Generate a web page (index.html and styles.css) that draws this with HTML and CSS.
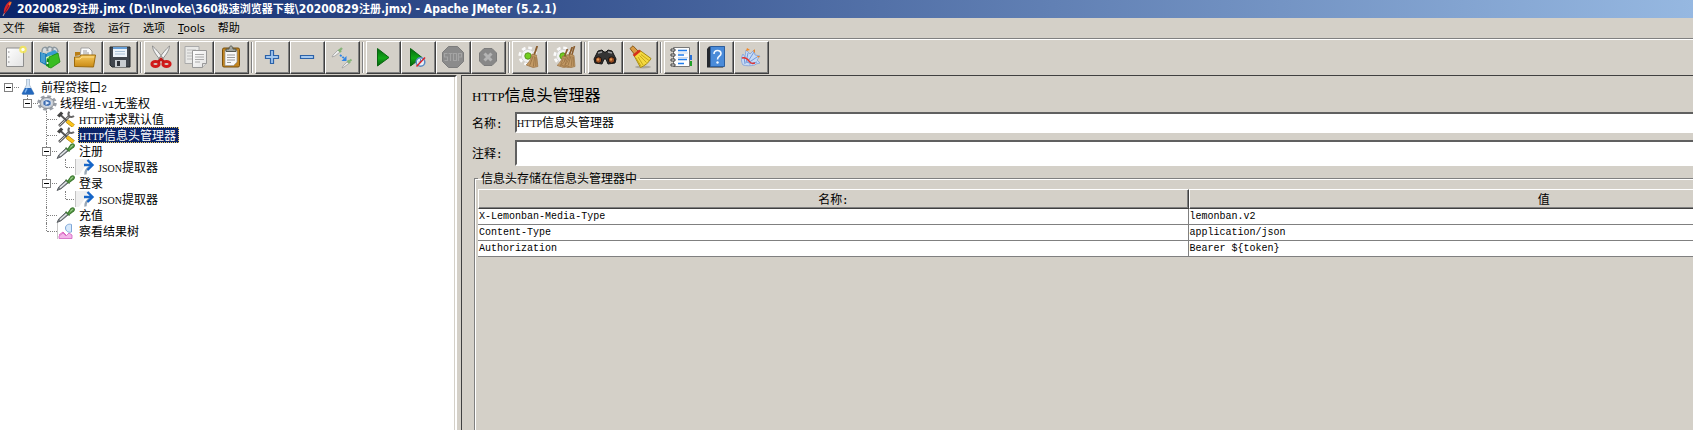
FILE: index.html
```html
<!DOCTYPE html>
<html lang="zh-CN">
<head>
<meta charset="utf-8">
<title>20200829注册.jmx - Apache JMeter (5.2.1)</title>
<link rel="stylesheet" href="styles.css">
</head>
<body>
<svg class="defs" aria-hidden="true">
  <defs>
    <linearGradient id="green" x1="0" y1="0" x2="0" y2="1"><stop offset="0" stop-color="#066a10"/><stop offset=".55" stop-color="#12a818"/><stop offset="1" stop-color="#055c0c"/></linearGradient>
    <linearGradient id="folder" x1="0" y1="0" x2="0" y2="1"><stop offset="0" stop-color="#f7c85a"/><stop offset="1" stop-color="#c98a14"/></linearGradient>
    <linearGradient id="paper" x1="0" y1="0" x2="1" y2="1"><stop offset="0" stop-color="#ffffff"/><stop offset="1" stop-color="#e2e2e2"/></linearGradient>
    <symbol id="gear" viewBox="0 0 20 20" preserveAspectRatio="none">
      <circle cx="10" cy="10" r="8" fill="none" stroke="#9a9fa7" stroke-width="3.600" stroke-dasharray="3.600 2.683"/>
      <circle cx="10" cy="10" r="7" fill="#c6cad0" stroke="#858a92"/>
      <circle cx="10" cy="10" r="4.200" fill="#3f6db0" stroke="#e9edf3"/>
      <path d="M8.600 7.400l4 2.600-4 2.600z" fill="#dce9fb"/>
    </symbol>
    <symbol id="tools" viewBox="0 0 20 16">
      <path d="M3 15L14 4.500" stroke="#555" stroke-width="2.600"/>
      <path d="M3.500 14.500L14 4.500" stroke="#d8d8d8" stroke-width="1"/>
      <path d="M13.500 .8a3.400 3.400 0 0 0-.4 4.400 3.400 3.400 0 0 0 4.800-.3" fill="none" stroke="#666" stroke-width="1.900"/>
      <path d="M3.500 3L11 10" stroke="#555" stroke-width="1.800"/>
      <path d="M1 4.500L5 .5l2.300 2-3.800 4z" fill="#444"/>
      <path d="M11 10l6.500 5" stroke="#9c7100" stroke-width="4"/>
      <path d="M11 10l6.500 5" stroke="#f8c31e" stroke-width="3"/>
    </symbol>
    <symbol id="dropper" viewBox="0 0 20 16">
      <path d="M1 15.500l1.800-3.600 7.500-7 2.600 2.400-8 6.600z" fill="#777c80" stroke="#50565a" stroke-width=".8"/>
      <path d="M4 12.800l7-6.400" stroke="#e8eced" stroke-width="1.300"/>
      <path d="M9.500 4.800l4 3.800M11.500 6.800l2.400-3.800c1.200-2 3-2.600 4-1.600s.2 2.600-1.600 3.600l-3.300 2.600z" fill="#62a550" stroke="#3d7a30" stroke-width="1.200"/>
      <path d="M14.300 4.200l2.400-2" stroke="#b5dba6"/>
    </symbol>
    <symbol id="extract" viewBox="0 0 20 16">
      <path d="M0 0h15L4 16H0z" fill="#efefef"/>
      <path d="M.5 0v16" stroke="#c4c4c4"/>
      <path d="M10.500 15.500c-.5-3 .5-5 4-7.500" fill="none" stroke="#9aa9b8" stroke-width="2.400"/>
      <path d="M9 6h8M12.500 1l5 5-5 5" fill="none" stroke="#1565c8" stroke-width="2.400"/>
    </symbol>
    <symbol id="broom" viewBox="0 0 12 22" preserveAspectRatio="none">
      <path d="M10.500 0L7.500 10" stroke="#8a5c2c" stroke-width="1.600"/>
      <path d="M6 8l4 1.500 1 11-4 1-6-2.500c3-3 4.500-7 5-11z" fill="#c39a66" stroke="#9a7244" stroke-width=".7"/>
      <path d="M7 10L4 19.500M8.200 10.500l-1 10M9.300 11v9" stroke="#8a6438" stroke-width=".6"/>
    </symbol>
    <symbol id="cog" viewBox="0 0 20 20">
      <circle cx="10" cy="10" r="7.600" fill="none" stroke="#fbfbfb" stroke-width="4" stroke-dasharray="3.400 2.570"/>
      <circle cx="10" cy="10" r="6.600" fill="#f2f2f2" stroke="#d4d4d4"/>
      <circle cx="10" cy="10" r="3.200" fill="#72cf20" stroke="#58941e"/>
    </symbol>
  </defs>
</svg>

<header class="titlebar">
  <svg class="app-icon" viewBox="0 0 12 16"><path d="M2 15L6 7" stroke="#c8a9a4" stroke-width="1"/><path d="M3 13C2 8 5 2 9 0c2 2 0 8-6 13z" fill="#d4252c"/><path d="M7.500 3C9 1 10 .5 10.500 1c.3 1-1 3-2 4z" fill="#f07a2a"/><path d="M3.500 12L8 4" stroke="#761326" stroke-width=".8"/></svg>
  <h1 class="window-title">20200829<span class="han">注册</span>.jmx (D:\Invoke\360<span class="han">极速浏览器下载</span>\20200829<span class="han">注册</span>.jmx) - Apache JMeter (5.2.1)</h1>
</header>

<nav class="menubar">
  <button class="menu">文件</button>
  <button class="menu">编辑</button>
  <button class="menu">查找</button>
  <button class="menu">运行</button>
  <button class="menu">选项</button>
  <button class="menu"><u>T</u>ools</button>
  <button class="menu">帮助</button>
</nav>

<div class="toolbar" role="toolbar">
  <button class="tool" aria-label="新建"><svg viewBox="0 0 24 24"><path d="M3.500 3h17v18.500h-17z" fill="url(#paper)" stroke="#8e8e8e"/><path d="M5 7h1.500M5 12h1.500M5 17h1.500" stroke="#888"/><circle cx="20" cy="4.500" r="3.800" fill="#f6e94e" opacity=".8"/><circle cx="20" cy="4.500" r="1.700" fill="#fffef0"/></svg></button>
  <button class="tool" aria-label="模板"><svg viewBox="0 0 24 24"><path d="M4 7C4 1 9 1 10 6M9 6c0-6 6-5 6 0M14 6c0-5 5-5 6 1" fill="#d6dde2" stroke="#8c979e" stroke-width="1.500"/><path d="M2 7l7 2v12l-7-4z" fill="#1e7db8"/><path d="M4 8v9M6 9v9" stroke="#70c1ec"/><path d="M9 8l8-3 3 3v4l-11 4z" fill="#3a9cd1"/><path d="M8 12l6-2v11l-5 2z" fill="#d4f7b6"/><path d="M11 12l9-4 2 9-9 6-3-1z" fill="#39bd22" stroke="#1a8712" stroke-width=".8"/><path d="M9 13l2 1v8l-3-1z" fill="#168d19"/><circle cx="9.500" cy="18" r="1" fill="#fff"/></svg></button>
  <button class="tool" aria-label="打开"><svg viewBox="0 0 24 24"><path d="M2 11V7h5l1 3z" fill="#b97d14"/><path d="M7 14L8 3h8l3 3v8z" fill="#fbfbfb" stroke="#929292" stroke-width=".8"/><path d="M10 6h4M10 8h6M10 10h6" stroke="#999"/><path d="M1.500 21.500V12l5 0 1.500-2h14.500l-2 12z" fill="url(#folder)" stroke="#9c6a0c"/><path d="M3 14h4l2-2h12" fill="none" stroke="#fbdd8b"/></svg></button>
  <button class="tool" aria-label="保存"><svg viewBox="0 0 24 24"><path d="M2 2h20v20H4l-2-2z" fill="#41464d" stroke="#24282d"/><path d="M5 2h14v10H5z" fill="#eef4fa"/><path d="M5 2h14v2H5z" fill="#69a0d7"/><path d="M7 6.500h10M7 9h10" stroke="#abc2d7"/><path d="M7 15h11v7H7z" fill="#c8ccd0"/><path d="M9 16h3v5H9z" fill="#30343a"/></svg></button>
  <span class="separator"></span>
  <button class="tool" aria-label="剪切"><svg viewBox="0 0 24 24"><path d="M3.500 1c0 4 4 10 9 15l2-2C11 9 7 4 3.500 1zM20.500 1c0 4-4 10-9 15l-2-2C13 9 17 4 20.500 1z" fill="#f2f2f2" stroke="#858585" stroke-width=".9"/><ellipse cx="6.500" cy="19" rx="3.600" ry="2.600" fill="none" stroke="#d11a1a" stroke-width="3"/><ellipse cx="17.500" cy="19" rx="3.600" ry="2.600" fill="none" stroke="#d11a1a" stroke-width="3"/><path d="M9 17l3-3 3 3" fill="none" stroke="#c11717" stroke-width="2.500"/></svg></button>
  <button class="tool" aria-label="复制"><svg viewBox="0 0 24 24"><path d="M1 1.500h14v17H1z" fill="#e9e9e7" stroke="#aaa"/><path d="M3 5h9M3 8h6M3 11h5M3 14h5" stroke="#bbb"/><path d="M8.500 5.500h14v13l-4 4h-10z" fill="url(#paper)" stroke="#989898"/><path d="M11 9.500h9M11 12h9M11 14.500h9M11 17h5" stroke="#aaa"/><path d="M22.500 18.500h-4v4" fill="#ddd" stroke="#999"/></svg></button>
  <button class="tool" aria-label="粘贴"><svg viewBox="0 0 24 24"><rect x="3.500" y="3" width="17" height="19" rx="1.500" fill="#c1841f" stroke="#79500e"/><path d="M6 5.500h12v11.500l-3.500 3.500H6z" fill="#f8f8f8" stroke="#999" stroke-width=".7"/><path d="M8 10h8M8 12.500h8M8 15h8M8 17.500h4" stroke="#999"/><path d="M7 6.500V4h3c0-4 4-4 4 0h3v2.500z" fill="#a3a6a0" stroke="#55584f"/></svg></button>
  <span class="separator"></span>
  <button class="tool" aria-label="展开"><svg viewBox="0 0 24 24"><path d="M10.500 5.500h3v5h5v3h-5v5h-3v-5h-5v-3h5z" fill="#a3c8f0" stroke="#2c62a8" stroke-width="1.200"/></svg></button>
  <button class="tool" aria-label="折叠"><svg viewBox="0 0 24 24"><path d="M5.500 10.500h13v3h-13z" fill="#a3c8f0" stroke="#2c62a8" stroke-width="1.200"/></svg></button>
  <button class="tool" aria-label="切换"><svg viewBox="0 0 24 24"><path d="M2 12l1-2 5-5 2 2-5 4z" fill="#eee" stroke="#999" stroke-width=".7"/><path d="M8.500 4.500l2.500 2.500M9.500 5.500L12 3" stroke="#86b47a" stroke-width="2.400"/><path d="M10 10l4.500 3.500" stroke="#3185e5" stroke-width="1.800" stroke-dasharray="2 1"/><path d="M16.500 11v5h-5z" fill="#3185e5"/><path d="M12 23l1-2 4-4 2 1.500-5 3.500z" fill="#eee" stroke="#999" stroke-width=".7"/><path d="M17.500 15.500l2.500 2.500M19 16.500l2.500-2" stroke="#86b47a" stroke-width="2.200"/></svg></button>
  <span class="separator"></span>
  <button class="tool" aria-label="启动"><svg viewBox="0 0 24 24"><path d="M6.500 3.500L18 12.500 6.500 21z" fill="url(#green)" stroke="#0a6511"/></svg></button>
  <button class="tool" aria-label="不停顿开始"><svg viewBox="0 0 24 24"><path d="M4.500 3.500L16 12.500 4.500 21z" fill="url(#green)" stroke="#0a6511"/><circle cx="14.500" cy="17" r="4.300" fill="#e6eef8" stroke="#5889c2" stroke-width="1.500"/><path d="M14.500 14v3h-2" fill="none" stroke="#5889c2"/><path d="M10.500 21.500L19 12.500" stroke="#d8222a" stroke-width="1.500"/></svg></button>
  <button class="tool" aria-label="停止" disabled><svg viewBox="0 0 24 24"><path d="M7.500 1.500h9l6 6v9l-6 6h-9l-6-6v-9z" fill="#8b8b8b" stroke="#7c7c7c"/><path d="M6.500 8.500H3.500V12h3v3.500h-3M7.500 8.500h4M9.500 8.500v7.500M12.500 8.500h3v7h-3zM17.500 16V8.500h3V12h-3" fill="none" stroke="#a4a4a4" stroke-width="1.200"/></svg></button>
  <button class="tool" aria-label="关闭" disabled><svg viewBox="0 0 24 24"><path d="M8 3.500h8l4.500 4.500v8l-4.500 4.500H8L3.500 16V8z" fill="#888" stroke="#7b7b7b"/><path d="M8.500 8.500l7 7M15.500 8.500l-7 7" stroke="#b4b4b4" stroke-width="3"/></svg></button>
  <span class="separator"></span>
  <button class="tool" aria-label="清除"><svg viewBox="0 0 24 24"><use href="#cog" x="1" y="1" width="20" height="20"/><use href="#broom" x="8" y="1" width="14" height="22"/></svg></button>
  <button class="tool" aria-label="清除全部"><svg viewBox="0 0 24 24"><use href="#cog" x="1" y="1" width="20" height="20"/><use href="#broom" x="4" y="4" width="13" height="19"/><use href="#broom" x="8" y="2" width="14" height="21"/><use href="#broom" x="12" y="1" width="12" height="22"/></svg></button>
  <span class="separator"></span>
  <button class="tool" aria-label="搜索"><svg viewBox="0 0 24 24"><path d="M5 6l4-1 2 2h2l2-2 4 1 4 8-1 4-7 1-2-5h-2l-2 5-7-1-1-4z" fill="#343434" stroke="#161616"/><path d="M5 8l4-1M15 7l4 1" stroke="#9b9b9b" stroke-width="1.300"/><circle cx="5.500" cy="15" r="3.200" fill="#984b1f" stroke="#161616"/><circle cx="18.500" cy="15" r="3.200" fill="#984b1f" stroke="#161616"/><circle cx="5" cy="14.500" r="1.200" fill="#e69b57"/><circle cx="18" cy="14.500" r="1.200" fill="#e69b57"/></svg></button>
  <button class="tool" aria-label="重置搜索"><svg viewBox="0 0 24 24"><ellipse cx="15" cy="22" rx="8" ry="1.500" fill="#aaa69e"/><path d="M2 3.500L5 .8 11 7 7 10z" fill="#d99b45" stroke="#8b5c1b"/><path d="M6 10.500l6-5 11 8c-2 4-6 7-10.500 9z" fill="#f4d93f" stroke="#a68a10"/><path d="M8 13l5 8M10 12l5 8M11.500 10.500l7 7M13 9.500l8 6" stroke="#c6a71b"/><path d="M5.500 10.800l6.500-5.300" stroke="#d62f1a" stroke-width="2.600"/></svg></button>
  <span class="separator"></span>
  <button class="tool" aria-label="函数助手"><svg viewBox="0 0 24 24"><path d="M20 10h3v5h-3z" fill="#2a70d4"/><path d="M20 16h3v5h-3z" fill="#20a028"/><path d="M4.500 2.500h16v19h-16z" fill="#fdfdfd" stroke="#777"/><path d="M9 5.500h9M9 10h6M9 14.500h9M9 18.500h6" stroke="#1f7cec" stroke-width="1.500"/><path d="M9 8h10M9 12.500h10" stroke="#c7d7e8"/><path d="M2 4h4v2H2zM2 9h4v2H2zM2 14h4v2H2zM2 19h4v2H2z" fill="#eee" stroke="#333" stroke-width=".9"/></svg></button>
  <button class="tool" aria-label="帮助"><svg viewBox="0 0 24 24"><path d="M3 4l2-2.500h16V20l-2 2.500H3z" fill="#23272d"/><path d="M6.500 1.500h14v20h-14z" fill="#4a8bd9" stroke="#2c5e9e"/><path d="M10 9c0-4.500 7-4.500 7-.5 0 3-3.500 2.500-3.500 6" fill="none" stroke="#f3f8ff" stroke-width="1.600"/><circle cx="13.500" cy="17.500" r="1.200" fill="#f3f8ff"/></svg></button>
  <button class="tool" aria-label="关于"><svg viewBox="0 0 24 24"><path d="M4 20C2 17 2 12 4 9l2 3 1-7 4 4 4-4 1 5 5 1-3 4 3 3-4 1-1 1c-4 1-9 1-12 0z" fill="#c6daf6" stroke="#7fa0d8" stroke-width=".8"/><path d="M6 19L5 12M7 18L9 8M8 18l7-11M9 18l9-6M10 19l8-2" stroke="#5f88d0" stroke-width=".8"/><path d="M3 13c3-1 5 0 7 3 1 2 3 3 6 2" fill="none" stroke="#e3342f" stroke-width="1.400"/><path d="M7 6l1-3 3 2zM14 6l2-2 0 4zM18 11l3 0-2 2z" fill="#f08626"/></svg></button>
</div>

<main class="workspace">
  <aside class="tree-pane">
    <ul class="tree">
      <li class="node root">
        <div class="row"><button class="toggle" aria-label="折叠"></button><svg class="icon" viewBox="0 0 20 16"><path d="M8.500 0h3v6l4.500 8.500q0 1-1 1H5q-1 0-1-1L8.500 6z" fill="#d7e6f5" stroke="#a6b8cc" stroke-width=".8"/><path d="M7 9h6l3 5.500q0 1-1 1H5q-1 0-1-1z" fill="#2468bd"/><path d="M9 9.500l-2 4" stroke="#80b4ee" stroke-width="1.500"/></svg><span class="label">前程贷接口<span class="latin">2</span></span></div>
        <ul>
          <li class="node">
            <div class="row"><button class="toggle" aria-label="折叠"></button><svg class="icon"><use href="#gear"/></svg><span class="label">线程组<span class="latin">-v1</span>无鉴权</span></div>
            <ul>
              <li class="node"><div class="row"><svg class="icon"><use href="#tools"/></svg><span class="label"><span class="caps">HTTP</span>请求默认值</span></div></li>
              <li class="node"><div class="row"><svg class="icon"><use href="#tools"/></svg><span class="label selected"><span class="caps">HTTP</span>信息头管理器</span></div></li>
              <li class="node">
                <div class="row"><button class="toggle" aria-label="折叠"></button><svg class="icon"><use href="#dropper"/></svg><span class="label">注册</span></div>
                <ul><li class="node"><div class="row"><svg class="icon"><use href="#extract"/></svg><span class="label"><span class="caps">JSON</span>提取器</span></div></li></ul>
              </li>
              <li class="node">
                <div class="row"><button class="toggle" aria-label="折叠"></button><svg class="icon"><use href="#dropper"/></svg><span class="label">登录</span></div>
                <ul><li class="node"><div class="row"><svg class="icon"><use href="#extract"/></svg><span class="label"><span class="caps">JSON</span>提取器</span></div></li></ul>
              </li>
              <li class="node"><div class="row"><svg class="icon"><use href="#dropper"/></svg><span class="label">充值</span></div></li>
              <li class="node"><div class="row"><svg class="icon" viewBox="0 0 20 16"><path d="M1.500 0v16" stroke="#c8c8c8"/><path d="M3 15.500V13l4-3 3 3 3-3 3 2v3.500z" fill="#f3b4e8" stroke="#d060c0" stroke-width=".8"/><path d="M15.500 1.500c-3-1-6 .5-6 3.500s3 5 6 4z" fill="#d7e9fb" stroke="#7ea7d8"/><path d="M3 12l4-3 3 3" fill="none" stroke="#e05fc0"/></svg><span class="label">察看结果树</span></div></li>
            </ul>
          </li>
        </ul>
      </li>
    </ul>
  </aside>

  <section class="editor">
    <form class="editor-form">
      <h2 class="heading"><span class="caps">HTTP</span>信息头管理器</h2>
      <div class="field"><label for="name">名称<span class="latin colon">:</span></label><div class="value-box"><input class="field-input" id="name" type="text" aria-describedby="name-text"><span class="value" id="name-text"><span class="caps">HTTP</span>信息头管理器</span></div></div>
      <div class="field comment"><label for="comment">注释<span class="latin colon">:</span></label><div class="value-box"><input class="field-input" id="comment" type="text"></div></div>
      <fieldset class="headers">
        <legend>信息头存储在信息头管理器中</legend>
        <table class="grid">
          <thead><tr><th>名称<span class="latin colon">:</span></th><th>值</th></tr></thead>
          <tbody>
            <tr><td>X-Lemonban-Media-Type</td><td>lemonban.v2</td></tr>
            <tr><td>Content-Type</td><td>application/json</td></tr>
            <tr><td>Authorization</td><td>Bearer ${token}</td></tr>
          </tbody>
        </table>
      </fieldset>
    </form>
  </section>
</main>
</body>
</html>
```
FILE: styles.css
```css
:root {
  --face: #d4d0c8;
  --shadow: #808080;
  --dark: #404040;
  --cjk: "Noto Sans CJK SC", sans-serif;
}

* { box-sizing: border-box; }

body {
  margin: 0;
  height: 100vh;
  display: flex;
  flex-direction: column;
  overflow: hidden;
  background: var(--face);
  color: #000;
  font: 12px/16px var(--cjk);
}

.defs { position: absolute; width: 0; height: 0; }

button { font: inherit; color: inherit; padding: 0; border: 0; background: none; }

.titlebar {
  flex: none;
  height: 18px;
  display: flex;
  align-items: center;
  gap: 4px;
  padding-left: 1px;
  background: linear-gradient(to right, #0a246a, #96b8e1);
}

.app-icon { width: 12px; height: 16px; }

.window-title {
  margin: 0;
  color: #fff;
  font: bold 12px/18px "DejaVu Sans Condensed", "DejaVu Sans", var(--cjk);
  white-space: nowrap;
}

.han { font-family: var(--cjk); font-size: 11px; line-height: 1; }

.menubar {
  flex: none;
  height: 22px;
  display: flex;
  gap: 13px;
  padding-left: 3px;
  border-bottom: 1px solid #fff;
  box-shadow: inset 0 -1px var(--shadow);
  font: 11px/20px "Noto Sans", var(--cjk);
}

.menu { height: 20px; }

.toolbar {
  flex: none;
  display: flex;
  margin-left: -2px;
  padding: 1px 0;
}

.tool {
  flex: none;
  width: 35px;
  height: 33px;
  display: flex;
  align-items: center;
  justify-content: center;
  padding: 0 2px 2px 0;
  border: 1px solid;
  border-color: #fff var(--dark) var(--dark) #fff;
  box-shadow: inset -1px -1px var(--shadow);
}

.tool svg { flex: none; width: 24px; height: 24px; }

.separator {
  flex: none;
  width: 2px;
  margin: 1px 2px;
  border-left: 1px solid var(--shadow);
  border-right: 1px solid #fff;
}

.workspace { flex: 1; display: flex; min-height: 0; }

.tree-pane {
  flex: none;
  width: 27%;
  padding-top: 2px;
  background: #fff;
  border-top: 2px solid var(--dark);
  border-right: 2px solid #fff;
  box-shadow: inset -1px 0 var(--face);
}

.tree, .tree ul { list-style: none; margin: 0; padding: 0; }

.tree ul { padding-left: 19px; }

.node { position: relative; }

.row {
  height: 16px;
  display: flex;
  align-items: center;
  padding-left: 18px;
}

.node:not(.root)::before {
  content: "";
  position: absolute;
  left: 8px;
  top: 0;
  bottom: 0;
  border-left: 1px dotted var(--shadow);
}

.node:not(.root):last-child::before { bottom: auto; height: 8px; }

.row::before {
  content: "";
  position: absolute;
  left: 9px;
  top: 8px;
  width: 10px;
  border-top: 1px dotted var(--shadow);
}

.toggle {
  position: absolute;
  left: 4px;
  top: 4px;
  width: 9px;
  height: 9px;
  border: 1px solid var(--shadow);
  background: linear-gradient(#000, #000) center / 5px 1px no-repeat #fff;
}

.icon { position: relative; flex: none; width: 20px; height: 16px; margin-right: 2px; }

.label {
  padding: 0 1px;
  line-height: 16px;
  white-space: nowrap;
}

.selected {
  padding-right: 3px;
  background: #0a246a;
  color: #fff;
  outline: 1px dotted #e8c860;
  outline-offset: -1px;
}

.latin { font-family: "Liberation Mono", monospace; font-size: 10px; line-height: 1; }
.caps { font-family: "Liberation Serif", serif; font-size: 10px; line-height: 1; }
.colon { font-weight: bold; }

.editor {
  flex: 1;
  min-width: 0;
  margin-left: 4px;
  overflow: hidden;
  border-top: 1px solid var(--dark);
  border-left: 1px solid var(--dark);
}

.editor-form {
  height: 100%;
  display: flex;
  flex-direction: column;
  margin-right: -210px;
  padding: 6px 0 0 10px;
}

.heading { margin: 0 0 6px; font: 16px/24px var(--cjk); }
.heading .caps { font-size: 13px; }

.field { display: flex; align-items: center; height: 21px; margin-bottom: 7px; }
.field label { flex: none; width: 43px; }
.comment { height: 26px; margin-bottom: 3px; }

.value-box { position: relative; flex: 1; align-self: stretch; }

.field-input {
  width: 100%;
  height: 100%;
  padding: 0 2px;
  border: 2px solid;
  border-color: #606060 #fff #fff #606060;
  background: #fff;
  font: 12px var(--cjk);
  outline: 0;
}

.value { position: absolute; left: 2px; top: 2px; pointer-events: none; }

.headers {
  flex: 1;
  min-width: 0;
  margin: 0 0 0 2px;
  padding: 2px 3px 0;
  border: 1px solid var(--shadow);
  border-bottom: 0;
  box-shadow: inset 1px 1px #fff;
}

.headers legend { padding: 0 3px; line-height: 18px; }

.grid {
  width: 100%;
  table-layout: fixed;
  border-collapse: separate;
  border-spacing: 0;
}

.grid th {
  height: 20px;
  padding: 0;
  font-weight: normal;
  line-height: 16px;
  border: 1px solid;
  border-color: #fff var(--dark) var(--dark) #fff;
  box-shadow: inset -1px -1px var(--shadow);
}

.grid td {
  height: 16px;
  padding: 0 1px;
  background: #fff;
  border-right: 1px solid var(--shadow);
  border-bottom: 1px solid var(--shadow);
  font: 10px/15px "Liberation Mono", monospace;
}
```
